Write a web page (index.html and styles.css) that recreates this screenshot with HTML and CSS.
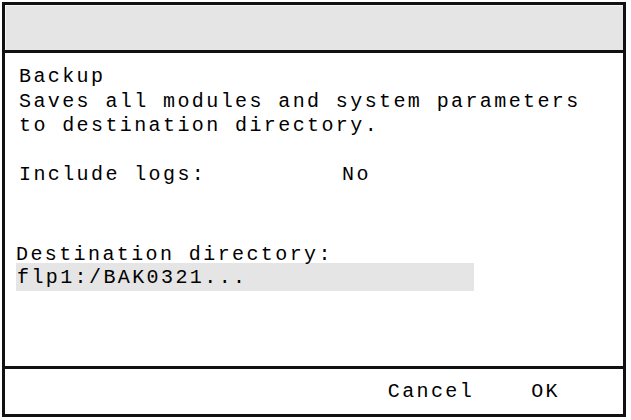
FILE: index.html
```html
<!DOCTYPE html>
<html lang="en">
<head>
    <meta charset="UTF-8">
    <title>Backup</title>
    <link rel="stylesheet" href="styles.css">
</head>
<body>
    <div class="dialog">
        <div class="header"></div>

        <div class="content">
            <div class="line">Backup</div>
            <div class="line">Saves all modules and system parameters</div>
            <div class="line">to destination directory.</div>
            <div class="line blank"></div>
            <div class="line option">
                <span class="option-label">Include logs:</span>
                <span class="option-value">No</span>
            </div>

            <div class="dest">
                <div class="dest-label">Destination directory:</div>
                <div class="dest-field">flp1:/BAK0321...</div>
            </div>
        </div>

        <div class="footer">
            <span class="softkey">Cancel</span>
            <span class="softkey">OK</span>
        </div>
    </div>
</body>
</html>
```

FILE: styles.css
```css
body {
    margin: 0;
    padding: 2px;
    background: #fff;
    font-family: "Courier New", "Nimbus Mono PS", "FreeMono", "Liberation Mono", monospace;
    font-size: 20px;
    letter-spacing: 2.4px;
    color: #000;
}

.dialog {
    width: 624px;
    height: 415px;
    box-sizing: border-box;
    border: 3px solid #111;
    display: flex;
    flex-direction: column;
}

.header {
    height: 45px;
    background-color: #e5e5e5;
    box-shadow: inset 1px 1px 0 #f6f6f6;
    border-bottom: 3px solid #111;
}

.content {
    flex: 1;
    padding: 12px 0 0 14px;
}

.line {
    line-height: 24.5px;
    white-space: pre;
}

.blank {
    height: 24.5px;
}

.option {
    display: flex;
}

.option-label {
    width: 323px;
}

.dest {
    margin-top: 57px;
    margin-left: -3px;
}

.dest-label {
    line-height: 20px;
}

.dest-field {
    margin-top: -2px;
    width: 458px;
    height: 28px;
    box-sizing: border-box;
    padding: 2px 0 0 1px;
    line-height: 26px;
    background-color: #e5e5e5;
}

.footer {
    height: 45px;
    border-top: 3px solid #111;
    display: flex;
    justify-content: flex-end;
    gap: 57px;
    padding-right: 63px;
    line-height: 45px;
}
```
